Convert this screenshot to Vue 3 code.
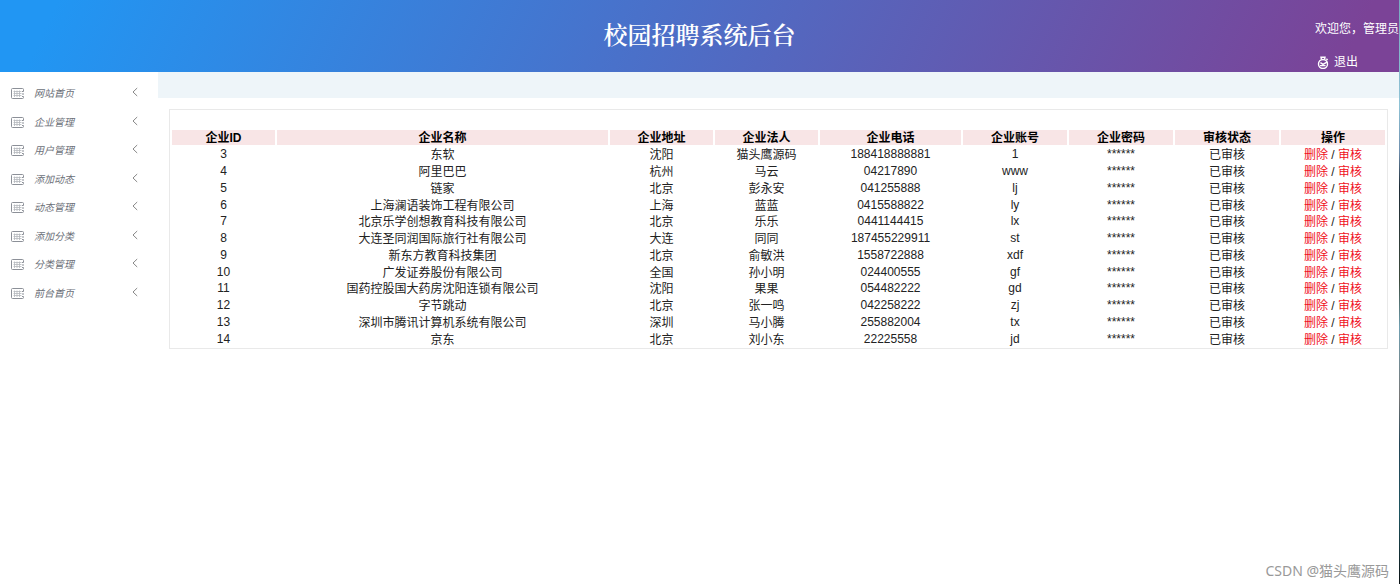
<template>
  <div class="layout">
    <div class="layout__page">
      <header class="top">
        <h1 class="top__title">校园招聘系统后台</h1>
        <div class="top__user">
          <span class="top__welcome">欢迎您，管理员</span>
          <a class="top__logout" href="#">
            <svg class="top__icon" viewBox="0 0 12 13" aria-hidden="true">
              <circle cx="6" cy="8" r="4.5" />
              <path d="M4.4 3.4 4 1.2h4l-.4 2.2M3.4 6.6 6 8.4l4.4-2.6M3 9.6h5.6M9.4 2.8l1.2 1.2" />
            </svg>
            退出
          </a>
        </div>
      </header>

      <div class="body">
        <nav class="menu">
          <ul class="menu__list">
            <li v-for="item in menus" :key="item">
              <a class="menu__link" href="#">
                <svg class="menu__icon" viewBox="0 0 13 12" aria-hidden="true">
                  <path d="M12.5 3.5V1.5a1 1 0 0 0-1-1h-10a1 1 0 0 0-1 1v8a1 1 0 0 0 1 1h10a1 1 0 0 0 1-1v-1M12.5 3.5h-1.5M12.5 8.5h-1.5M12 5v2" />
                  <path class="menu__grid" d="M2.5 3.5h8M2.5 5.5h8M2.5 7.5h8M3.5 2.5v6.5M6 2.5v6.5M8.5 2.5v6.5" />
                </svg>
                <em class="menu__text">{{ item }}</em>
                <svg class="menu__arrow" viewBox="0 0 6 10" aria-hidden="true">
                  <path d="M5.2 1 1 5l4.2 4" />
                </svg>
              </a>
            </li>
          </ul>
        </nav>

        <main class="content">
          <div class="content__bar"></div>
          <section class="panel">
            <table class="list">
              <colgroup>
                <col class="list__col" />
                <col />
                <col class="list__col" />
                <col class="list__col" />
                <col class="list__col list__col--phone" />
                <col class="list__col list__col--wide" />
                <col class="list__col list__col--wide" />
                <col class="list__col list__col--wide" />
                <col class="list__col list__col--wide" />
              </colgroup>
              <thead>
                <tr>
                  <th v-for="head in heads" :key="head" scope="col">{{ head }}</th>
                </tr>
              </thead>
              <tbody>
                <tr v-for="row in companies" :key="row.id">
                  <td>{{ row.id }}</td>
                  <td class="list__text">{{ row.name }}</td>
                  <td class="list__text">{{ row.address }}</td>
                  <td class="list__text">{{ row.owner }}</td>
                  <td>{{ row.phone }}</td>
                  <td>{{ row.account }}</td>
                  <td>******</td>
                  <td class="list__text">已审核</td>
                  <td class="list__text"><a href="#">删除</a> / <a href="#">审核</a></td>
                </tr>
              </tbody>
            </table>
          </section>
        </main>
      </div>
    </div>
    <div class="layout__edge"></div>
    <span class="watermark">CSDN @猫头鹰源码</span>
  </div>
</template>

<script setup>
const menus = ['网站首页', '企业管理', '用户管理', '添加动态', '动态管理', '添加分类', '分类管理', '前台首页']

const heads = ['企业ID', '企业名称', '企业地址', '企业法人', '企业电话', '企业账号', '企业密码', '审核状态', '操作']

const companies = [
  { id: 3, name: '东软', address: '沈阳', owner: '猫头鹰源码', phone: '188418888881', account: '1' },
  { id: 4, name: '阿里巴巴', address: '杭州', owner: '马云', phone: '04217890', account: 'www' },
  { id: 5, name: '链家', address: '北京', owner: '彭永安', phone: '041255888', account: 'lj' },
  { id: 6, name: '上海澜语装饰工程有限公司', address: '上海', owner: '蓝蓝', phone: '0415588822', account: 'ly' },
  { id: 7, name: '北京乐学创想教育科技有限公司', address: '北京', owner: '乐乐', phone: '0441144415', account: 'lx' },
  { id: 8, name: '大连圣同润国际旅行社有限公司', address: '大连', owner: '同同', phone: '187455229911', account: 'st' },
  { id: 9, name: '新东方教育科技集团', address: '北京', owner: '俞敏洪', phone: '1558722888', account: 'xdf' },
  { id: 10, name: '广发证券股份有限公司', address: '全国', owner: '孙小明', phone: '024400555', account: 'gf' },
  { id: 11, name: '国药控股国大药房沈阳连锁有限公司', address: '沈阳', owner: '果果', phone: '054482222', account: 'gd' },
  { id: 12, name: '字节跳动', address: '北京', owner: '张一鸣', phone: '042258222', account: 'zj' },
  { id: 13, name: '深圳市腾讯计算机系统有限公司', address: '深圳', owner: '马小腾', phone: '255882004', account: 'tx' },
  { id: 14, name: '京东', address: '北京', owner: '刘小东', phone: '22225558', account: 'jd' },
]
</script>

<style>
body {
  margin: 0;
  background: #fff;
}
</style>

<style scoped>
.layout {
  position: relative;
  display: flex;
  min-height: 100vh;
  font-family: 'Liberation Sans', 'Noto Sans CJK SC', sans-serif;
  font-size: 12px;
  color: #222;
}

.layout__page {
  flex: 1;
  min-width: 0;
}

.layout__edge {
  width: 1px;
  background: linear-gradient(180deg, #79a9c0 0%, #8fc3d6 18%, #6f8fae 26%, #1c2a35 32%, #3c4a3c 48%, #6f9fb0 56%, #777 68%, #1f4455 76%, #1d5560 88%, #0b1114 100%);
}

.top {
  display: grid;
  grid-template-columns: 1fr auto 1fr;
  height: 72px;
  background: linear-gradient(115deg, #2196f3 0%, #2196f3 4%, #7b4397 96%, #7b4397 100%);
  color: #fff;
}

.top__title {
  grid-column: 2;
  margin: 0;
  font-family: 'Noto Serif CJK SC', 'Noto Sans CJK SC', serif;
  font-size: 24px;
  font-weight: 600;
  line-height: 68px;
}

.top__user {
  display: flex;
  flex-direction: column;
  justify-self: end;
  gap: 17px;
  padding-top: 21px;
  line-height: 16px;
}

.top__logout {
  display: flex;
  align-items: center;
  gap: 5px;
  padding-left: 2px;
  color: #fff;
  text-decoration: none;
}

.top__icon {
  width: 12px;
  height: 13px;
  fill: none;
  stroke: #fff;
  stroke-width: 1.4;
}

.body {
  display: flex;
}

.menu {
  flex: 0 0 158px;
  padding-top: 8px;
}

.menu__list {
  display: grid;
  grid-auto-rows: 1fr;
  height: 228px;
  margin: 0;
  padding: 0;
  list-style: none;
}

.menu__link {
  display: flex;
  align-items: center;
  height: 100%;
  padding: 0 20px 0 11px;
  color: #6b6f78;
  text-decoration: none;
}

.menu__icon {
  width: 13px;
  height: 12px;
  fill: none;
  stroke: #8c9098;
}

.menu__grid {
  stroke: #b4b7bd;
  stroke-width: 0.8;
}

.menu__text {
  flex: 1;
  margin-left: 10px;
  font-size: 10px;
  line-height: 14px;
}

.menu__arrow {
  width: 6px;
  height: 10px;
  margin-bottom: 4px;
  fill: none;
  stroke: #888;
}

.content {
  flex: 1;
  min-width: 0;
}

.content__bar {
  height: 26px;
  background: #eef5f9;
}

.panel {
  margin: 11px 11px 0;
  padding-top: 18px;
  border: 1px solid #e9e9e9;
}

.list {
  width: 100%;
  height: 220px;
  table-layout: fixed;
  border-spacing: 2px;
  line-height: 14px;
  text-align: center;
}

.list__col {
  width: 103px;
}

.list__col--phone {
  width: 141px;
}

.list__col--wide {
  width: 104px;
}

.list th {
  padding: 1px 0 0;
  background: #f8e5e6;
  color: #000;
  font-weight: 700;
}

.list td {
  padding: 0;
}

.list .list__text {
  padding-top: 2px;
  line-height: 12px;
}

.list a {
  color: #f00f1c;
  text-decoration: none;
}

.watermark {
  position: absolute;
  right: 11px;
  bottom: 4px;
  font-family: 'Noto Sans', 'Noto Sans CJK SC', sans-serif;
  font-size: 14px;
  line-height: 18px;
  color: #999;
}
</style>
